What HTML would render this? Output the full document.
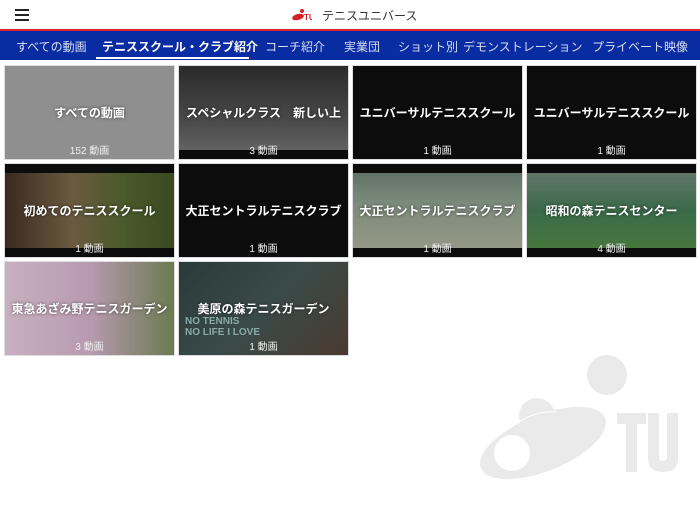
<!DOCTYPE html>
<html><head><meta charset="utf-8"><style>
*{margin:0;padding:0;box-sizing:border-box}
body{width:700px;height:525px;background:#fff;font-family:"Liberation Sans","Noto Sans CJK JP",sans-serif;position:relative;overflow:hidden}
.hdr{height:31px;position:relative;border-bottom:2px solid #e0252e}
.ham{position:absolute;left:15px;top:9px;width:14px}
.ham i{display:block;height:2px;background:#222;margin-bottom:3px}
.title{position:absolute;left:322px;top:7px;font-size:12px;color:#333}
.nav{position:absolute;top:31px;left:0;width:700px;height:29px;background:#0a2ca3;color:#d8def5;font-size:12px}
.nav span{position:absolute;top:7px;white-space:nowrap}
.nav .act{color:#fff;font-weight:bold}
.ul{position:absolute;left:96px;top:57px;width:153px;height:2px;background:#fff}
.t{position:absolute;width:171px;height:95px;border:1px solid #ddd;color:#fff;overflow:hidden}
.t .n{position:absolute;left:-10px;right:-10px;top:38px;text-align:center;font-size:12px;font-weight:bold;white-space:nowrap;text-shadow:0 0 3px rgba(0,0,0,.6)}
.t .c{position:absolute;left:0;right:0;bottom:2px;text-align:center;font-size:10px;color:#eee}
.bar{position:absolute;left:0;right:0;height:9px;background:#0c0c0c}
</style></head><body>
<div class="hdr"><div class="ham"><i></i><i></i><i></i></div>
<svg style="position:absolute;left:292px;top:9px" width="20" height="12" viewBox="0 0 20 12"><ellipse cx="6" cy="8" rx="6" ry="3" fill="#d42027" transform="rotate(-15 6 8)"/><circle cx="10" cy="2" r="2" fill="#d42027"/><text x="12" y="11" font-size="8" font-weight="bold" fill="#d42027" font-family="Liberation Sans">TU</text></svg>
<div class="title">テニスユニバース</div></div>
<div class="nav">
<span style="left:16px">すべての動画</span>
<span class="act" style="left:102px">テニススクール・クラブ紹介</span>
<span style="left:265px">コーチ紹介</span>
<span style="left:344px">実業団</span>
<span style="left:398px">ショット別</span>
<span style="left:463px">デモンストレーション</span>
<span style="left:592px">プライベート映像</span>
</div>
<div class="ul"></div>

<div class="t" style="left:4px;top:65px;background:#8f8f8f"><div class="n">すべての動画</div><div class="c">152 動画</div></div>
<div class="t" style="left:178px;top:65px;background:linear-gradient(180deg,#2a2a2a,#4a4a4a 60%,#6a6a6a)"><div class="bar" style="bottom:0"></div><div class="n">スペシャルクラス　新しい上</div><div class="c">3 動画</div></div>
<div class="t" style="left:352px;top:65px;background:#0c0c0c"><div class="n">ユニバーサルテニススクール</div><div class="c">1 動画</div></div>
<div class="t" style="left:526px;top:65px;background:#0c0c0c"><div class="n">ユニバーサルテニススクール</div><div class="c">1 動画</div></div>

<div class="t" style="left:4px;top:163px;background:linear-gradient(90deg,#3a2a20,#6a5a40 40%,#4a5a2a 70%,#3a4a20)"><div class="bar" style="top:0"></div><div class="bar" style="bottom:0"></div><div class="n">初めてのテニススクール</div><div class="c">1 動画</div></div>
<div class="t" style="left:178px;top:163px;background:#0c0c0c"><div class="n">大正セントラルテニスクラブ</div><div class="c">1 動画</div></div>
<div class="t" style="left:352px;top:163px;background:linear-gradient(180deg,#5a6a60,#7a8a7a 40%,#9a9a88)"><div class="bar" style="top:0"></div><div class="bar" style="bottom:0"></div><div class="n">大正セントラルテニスクラブ</div><div class="c">1 動画</div></div>
<div class="t" style="left:526px;top:163px;background:linear-gradient(180deg,#6a7a70,#3a6a4a 50%,#4a7a3a)"><div class="bar" style="top:0"></div><div class="bar" style="bottom:0"></div><div class="n">昭和の森テニスセンター</div><div class="c">4 動画</div></div>

<div class="t" style="left:4px;top:261px;background:linear-gradient(90deg,#c8b0c0,#b89ab0 50%,#6a7a50)"><div class="n">東急あざみ野テニスガーデン</div><div class="c">3 動画</div></div>
<div class="t" style="left:178px;top:261px;background:linear-gradient(135deg,#2a3a3a,#3a4a48 50%,#4a3a30)"><div style="position:absolute;left:6px;top:54px;font-size:10px;color:#8aa;line-height:11px;font-weight:bold">NO TENNIS<br>NO LIFE I LOVE</div><div class="n">美原の森テニスガーデン</div><div class="c">1 動画</div></div>

<svg style="position:absolute;left:470px;top:350px" width="220" height="140" viewBox="470 350 220 140">
<circle cx="607" cy="375" r="20" fill="#eaeaea"/>
<ellipse cx="543" cy="443" rx="67" ry="28" fill="#eaeaea" transform="rotate(-22 543 443)"/>
<circle cx="537" cy="416" r="18" fill="#eaeaea"/>
<path d="M520 421 Q540 410 556 412" stroke="#fff" stroke-width="1" fill="none"/>
<circle cx="512" cy="453" r="18" fill="#fff"/>
<path d="M617 413h29v11h-9v48h-11v-48h-9z" fill="#eaeaea"/>
<path d="M648 413h11v44q0 4 4 4t4-4v-44h11v46q0 13-15 13t-15-13z" fill="#eaeaea"/>
</svg>
</body></html>
